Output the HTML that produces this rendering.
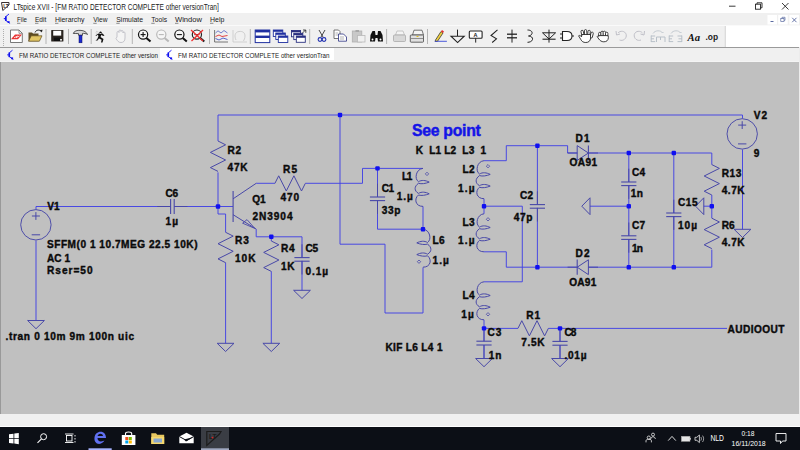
<!DOCTYPE html>
<html><head><meta charset="utf-8"><style>
*{margin:0;padding:0;box-sizing:border-box}
html,body{width:800px;height:450px;overflow:hidden;background:#c0c0c0;font-family:"Liberation Sans",sans-serif}
.a{position:absolute}
</style></head><body>
<div class="a" style="left:0;top:0;width:800px;height:13px;background:#fff"></div>
<div class="a" style="left:0;top:13px;width:800px;height:12px;background:#f0f0f0"></div>
<div class="a" style="left:0;top:25px;width:800px;height:1px;background:#fafafa"></div>
<div class="a" style="left:0;top:26px;width:725px;height:21px;background:#f0f0f0"></div>
<div class="a" style="left:725px;top:26px;width:75px;height:21px;background:#fff"></div>
<div class="a" style="left:0;top:47px;width:800px;height:1px;background:#9a9a9a"></div>
<div class="a" style="left:0;top:48px;width:800px;height:14px;background:#f0f0f0"></div>
<div class="a" style="left:0;top:61px;width:800px;height:1px;background:#f4f4f4"></div>
<div class="a" style="left:160px;top:48px;width:174px;height:12px;background:#fff"></div>
<div class="a" style="left:0;top:62px;width:800px;height:352px;background:#c0c0c0"></div>
<div class="a" style="left:0;top:62px;width:1px;height:352px;background:#999"></div>
<div class="a" style="left:799px;top:47px;width:1px;height:380px;background:#ececec"></div>
<div class="a" style="left:0;top:414px;width:800px;height:12px;background:#f0f0f0"></div>
<div class="a" style="left:0;top:426px;width:800px;height:1px;background:#fff"></div>
<div class="a" style="left:0;top:427px;width:800px;height:23px;background:#0c0f16"></div>
<svg class="a" style="left:0;top:0" width="800" height="450" viewBox="0 0 800 450" font-family="Liberation Sans, sans-serif">
<polyline points="218,141 218,115 742.5,115 742.5,118.5" fill="none" stroke="#4242e4" stroke-width="0.95"/>
<polyline points="218,172.4 218,206.5 233,206.5" fill="none" stroke="#4242e4" stroke-width="0.95"/>
<polyline points="170.5,206.5 36,206.5 36,209.5" fill="none" stroke="#4242e4" stroke-width="0.95"/>
<polyline points="36,240.5 36,320.5" fill="none" stroke="#4242e4" stroke-width="0.95"/>
<polyline points="174.2,206.5 218,206.5" fill="none" stroke="#4242e4" stroke-width="0.95"/>
<polyline points="218,206.5 218,214 225.6,214 225.6,232.3" fill="none" stroke="#4242e4" stroke-width="0.95"/>
<polyline points="225.6,262.7 225.6,343.3" fill="none" stroke="#4242e4" stroke-width="0.95"/>
<polyline points="256.2,183.3 274.9,183.3" fill="none" stroke="#4242e4" stroke-width="0.95"/>
<polyline points="256.2,229.1 256.2,236.8 302,236.8 302,257.6" fill="none" stroke="#4242e4" stroke-width="0.95"/>
<polyline points="305.3,183.3 362.5,183.3 362.5,168.4 423,168.4" fill="none" stroke="#4242e4" stroke-width="0.95"/>
<polyline points="271.3,236.8 271.3,241" fill="none" stroke="#4242e4" stroke-width="0.95"/>
<polyline points="271.3,271.4 271.3,343.3" fill="none" stroke="#4242e4" stroke-width="0.95"/>
<polyline points="302,260.8 302,290.3" fill="none" stroke="#4242e4" stroke-width="0.95"/>
<polyline points="340,115 340,244.2 385,244.2 385,313 423,313 423,267.4" fill="none" stroke="#4242e4" stroke-width="0.95"/>
<polyline points="377.5,168.4 377.5,197" fill="none" stroke="#4242e4" stroke-width="0.95"/>
<polyline points="377.5,200.2 377.5,229.2 423,229.2" fill="none" stroke="#4242e4" stroke-width="0.95"/>
<polyline points="423,206.4 423,229.2" fill="none" stroke="#4242e4" stroke-width="0.95"/>
<polyline points="484,160.7 506.3,160.7 506.3,145.7 567.6,145.7 567.6,153 577.3,153" fill="none" stroke="#4242e4" stroke-width="0.95"/>
<polyline points="484,198.7 484,206.2" fill="none" stroke="#4242e4" stroke-width="0.95"/>
<polyline points="484,206.2 484,213.8" fill="none" stroke="#4242e4" stroke-width="0.95"/>
<polyline points="484,206.2 522.3,206.2 522.3,281.8 484,281.8" fill="none" stroke="#4242e4" stroke-width="0.95"/>
<polyline points="484,251.8 506.3,251.8 506.3,267.2 577.3,267.2" fill="none" stroke="#4242e4" stroke-width="0.95"/>
<polyline points="484,319.8 484,328.4 518,328.4" fill="none" stroke="#4242e4" stroke-width="0.95"/>
<polyline points="548.4,328.4 727,328.4" fill="none" stroke="#4242e4" stroke-width="0.95"/>
<polyline points="484,328.4 484,341.2" fill="none" stroke="#4242e4" stroke-width="0.95"/>
<polyline points="484,345 484,358.5" fill="none" stroke="#4242e4" stroke-width="0.95"/>
<polyline points="560,328.4 560,341.4" fill="none" stroke="#4242e4" stroke-width="0.95"/>
<polyline points="560,345.2 560,358.5" fill="none" stroke="#4242e4" stroke-width="0.95"/>
<polyline points="537.4,145.7 537.4,204.6" fill="none" stroke="#4242e4" stroke-width="0.95"/>
<polyline points="537.4,207.8 537.4,267.2" fill="none" stroke="#4242e4" stroke-width="0.95"/>
<polyline points="588.4,153 711.8,153 711.8,164.6" fill="none" stroke="#4242e4" stroke-width="0.95"/>
<polyline points="588.4,267.2 711.8,267.2 711.8,249.6" fill="none" stroke="#4242e4" stroke-width="0.95"/>
<polyline points="628.8,153 628.8,182" fill="none" stroke="#4242e4" stroke-width="0.95"/>
<polyline points="628.8,185.2 628.8,235.8" fill="none" stroke="#4242e4" stroke-width="0.95"/>
<polyline points="628.8,239 628.8,267.2" fill="none" stroke="#4242e4" stroke-width="0.95"/>
<polyline points="590,206.2 628.8,206.2" fill="none" stroke="#4242e4" stroke-width="0.95"/>
<polyline points="673.8,153 673.8,213" fill="none" stroke="#4242e4" stroke-width="0.95"/>
<polyline points="673.8,216.2 673.8,267.2" fill="none" stroke="#4242e4" stroke-width="0.95"/>
<polyline points="711.8,195 711.8,218.2" fill="none" stroke="#4242e4" stroke-width="0.95"/>
<polyline points="703.8,206.2 711.8,206.2" fill="none" stroke="#4242e4" stroke-width="0.95"/>
<polyline points="742.5,149.5 742.5,229.3" fill="none" stroke="#4242e4" stroke-width="0.95"/>
<polyline points="218,141 225.6,144.8 210.4,152.4 225.6,160.0 210.4,167.6 218,171.4" fill="none" stroke="#4848a8" stroke-width="1.0"/>
<circle cx="35.9" cy="224.8" r="15.2" fill="none" stroke="#4848a8" stroke-width="0.95"/>
<line x1="31.9" y1="216.0" x2="39.9" y2="216.0" stroke="#4848a8" stroke-width="1.0"/>
<line x1="35.9" y1="212.10000000000002" x2="35.9" y2="219.9" stroke="#4848a8" stroke-width="1.0"/>
<line x1="31.7" y1="234.8" x2="40.1" y2="234.8" stroke="#4848a8" stroke-width="1.0"/>
<polygon points="27.599999999999998,320.5 44.4,320.5 36,328.70000000000005" fill="none" stroke="#4848a8" stroke-width="1.0"/>
<line x1="170.6" y1="198.9" x2="170.6" y2="214.1" stroke="#4848a8" stroke-width="1.1"/>
<line x1="174.2" y1="198.9" x2="174.2" y2="214.1" stroke="#4848a8" stroke-width="1.1"/>
<line x1="157.29999999999998" y1="206.5" x2="170.6" y2="206.5" stroke="#4848a8" stroke-width="0.95"/>
<line x1="174.2" y1="206.5" x2="187.5" y2="206.5" stroke="#4848a8" stroke-width="0.95"/>
<polyline points="225.6,232.3 233.2,236.10000000000002 218.0,243.70000000000002 233.2,251.3 218.0,258.90000000000003 225.6,262.7" fill="none" stroke="#4848a8" stroke-width="1.0"/>
<polygon points="217.2,343.3 234.0,343.3 225.6,351.50000000000006" fill="none" stroke="#4848a8" stroke-width="1.0"/>
<line x1="233.1" y1="191" x2="233.1" y2="222" stroke="#4848a8" stroke-width="1.1"/>
<line x1="233.1" y1="198.8" x2="256.2" y2="183.3" stroke="#4848a8" stroke-width="1.0"/>
<line x1="233.1" y1="214.7" x2="256.2" y2="229.1" stroke="#4848a8" stroke-width="1.0"/>
<polygon points="254.8,228.4 242.6,223.2 247.0,219.6" fill="none" stroke="#4848a8" stroke-width="0.9"/>
<polyline points="274.9,183.4 278.7,175.8 286.29999999999995,191.0 293.9,175.8 301.5,191.0 305.29999999999995,183.4" fill="none" stroke="#4848a8" stroke-width="1.0"/>
<polyline points="271.3,241 278.90000000000003,244.8 263.7,252.4 278.90000000000003,260.0 263.7,267.6 271.3,271.4" fill="none" stroke="#4848a8" stroke-width="1.0"/>
<polygon points="262.9,343.3 279.70000000000005,343.3 271.3,351.50000000000006" fill="none" stroke="#4848a8" stroke-width="1.0"/>
<line x1="294.4" y1="257.6" x2="309.6" y2="257.6" stroke="#4848a8" stroke-width="1.1"/>
<line x1="294.4" y1="261.20000000000005" x2="309.6" y2="261.20000000000005" stroke="#4848a8" stroke-width="1.1"/>
<line x1="302" y1="244.3" x2="302" y2="257.6" stroke="#4848a8" stroke-width="0.95"/>
<line x1="302" y1="261.20000000000005" x2="302" y2="274.50000000000006" stroke="#4848a8" stroke-width="0.95"/>
<polygon points="293.59999999999997,290.3 310.40000000000003,290.3 302,298.50000000000006" fill="none" stroke="#4848a8" stroke-width="1.0"/>
<line x1="369.9" y1="197" x2="385.1" y2="197" stroke="#4848a8" stroke-width="1.1"/>
<line x1="369.9" y1="200.6" x2="385.1" y2="200.6" stroke="#4848a8" stroke-width="1.1"/>
<line x1="377.5" y1="183.7" x2="377.5" y2="197" stroke="#4848a8" stroke-width="0.95"/>
<line x1="377.5" y1="200.6" x2="377.5" y2="213.9" stroke="#4848a8" stroke-width="0.95"/>
<path d="M423,168.4 C416,168.9 414,178.9 418.5,181.70000000000002 C421.5,179.8 425.5,180.20000000000002 429.2,182.1 C425.5,183.6 421.5,184.20000000000002 418.5,183.3 C414,186.4 414,190.9 418.5,193.4 C421.5,191.5 425.5,191.9 429.2,193.8 C425.5,195.3 421.5,195.9 418.5,195.0 C414,198.4 415,206.4 423,206.4" fill="none" stroke="#4848a8" stroke-width="1.0"/>
<polygon points="427,172.20000000000002 428.7,173.9 427,175.6 425.3,173.9" fill="none" stroke="#4848a8" stroke-width="0.8"/>
<path d="M423,229.2 C430,229.7 432,239.7 427.5,242.5 C424.5,240.6 420.5,241.0 416.8,242.89999999999998 C420.5,244.39999999999998 424.5,245.0 427.5,244.1 C432,247.2 432,251.7 427.5,254.2 C424.5,252.29999999999998 420.5,252.7 416.8,254.6 C420.5,256.09999999999997 424.5,256.7 427.5,255.79999999999998 C432,259.2 431,267.2 423,267.2" fill="none" stroke="#4848a8" stroke-width="1.0"/>
<polygon points="419,260.0 417.3,261.7 419,263.4 420.7,261.7" fill="none" stroke="#4848a8" stroke-width="0.8"/>
<path d="M484,160.7 C477,161.2 475,171.2 479.5,174.0 C482.5,172.1 486.5,172.5 490.2,174.39999999999998 C486.5,175.89999999999998 482.5,176.5 479.5,175.6 C475,178.7 475,183.2 479.5,185.7 C482.5,183.79999999999998 486.5,184.2 490.2,186.1 C486.5,187.6 482.5,188.2 479.5,187.29999999999998 C475,190.7 476,198.7 484,198.7" fill="none" stroke="#4848a8" stroke-width="1.0"/>
<polygon points="488,164.5 489.7,166.2 488,167.89999999999998 486.3,166.2" fill="none" stroke="#4848a8" stroke-width="0.8"/>
<path d="M484,213.8 C477,214.3 475,224.3 479.5,227.10000000000002 C482.5,225.20000000000002 486.5,225.60000000000002 490.2,227.5 C486.5,229.0 482.5,229.60000000000002 479.5,228.70000000000002 C475,231.8 475,236.3 479.5,238.8 C482.5,236.9 486.5,237.3 490.2,239.20000000000002 C486.5,240.70000000000002 482.5,241.3 479.5,240.4 C475,243.8 476,251.8 484,251.8" fill="none" stroke="#4848a8" stroke-width="1.0"/>
<polygon points="488,217.60000000000002 489.7,219.3 488,221.0 486.3,219.3" fill="none" stroke="#4848a8" stroke-width="0.8"/>
<path d="M484,281.8 C477,282.3 475,292.3 479.5,295.1 C482.5,293.2 486.5,293.6 490.2,295.5 C486.5,297.0 482.5,297.6 479.5,296.7 C475,299.8 475,304.3 479.5,306.8 C482.5,304.90000000000003 486.5,305.3 490.2,307.2 C486.5,308.7 482.5,309.3 479.5,308.40000000000003 C475,311.8 476,319.8 484,319.8" fill="none" stroke="#4848a8" stroke-width="1.0"/>
<polygon points="488,312.6 489.7,314.3 488,316.0 486.3,314.3" fill="none" stroke="#4848a8" stroke-width="0.8"/>
<polyline points="518,328.3 521.8,320.7 529.4,335.90000000000003 537.0,320.7 544.6,335.90000000000003 548.4,328.3" fill="none" stroke="#4848a8" stroke-width="1.0"/>
<line x1="476.4" y1="341.2" x2="491.6" y2="341.2" stroke="#4848a8" stroke-width="1.1"/>
<line x1="476.4" y1="345.0" x2="491.6" y2="345.0" stroke="#4848a8" stroke-width="1.1"/>
<line x1="484" y1="327.9" x2="484" y2="341.2" stroke="#4848a8" stroke-width="0.95"/>
<line x1="484" y1="345.0" x2="484" y2="358.3" stroke="#4848a8" stroke-width="0.95"/>
<polygon points="475.59999999999997,358.5 492.40000000000003,358.5 484,366.70000000000005" fill="none" stroke="#4848a8" stroke-width="1.0"/>
<line x1="552.4" y1="341.4" x2="567.6" y2="341.4" stroke="#4848a8" stroke-width="1.1"/>
<line x1="552.4" y1="345.2" x2="567.6" y2="345.2" stroke="#4848a8" stroke-width="1.1"/>
<line x1="560" y1="328.09999999999997" x2="560" y2="341.4" stroke="#4848a8" stroke-width="0.95"/>
<line x1="560" y1="345.2" x2="560" y2="358.5" stroke="#4848a8" stroke-width="0.95"/>
<polygon points="551.6,358.5 568.4,358.5 560,366.70000000000005" fill="none" stroke="#4848a8" stroke-width="1.0"/>
<line x1="529.8" y1="204.6" x2="545.0" y2="204.6" stroke="#4848a8" stroke-width="1.1"/>
<line x1="529.8" y1="208.2" x2="545.0" y2="208.2" stroke="#4848a8" stroke-width="1.1"/>
<line x1="537.4" y1="191.29999999999998" x2="537.4" y2="204.6" stroke="#4848a8" stroke-width="0.95"/>
<line x1="537.4" y1="208.2" x2="537.4" y2="221.5" stroke="#4848a8" stroke-width="0.95"/>
<polygon points="577.2,145.6 577.2,160.4 588.4,153" fill="none" stroke="#4848a8" stroke-width="1.0"/>
<line x1="588.4" y1="145.4" x2="588.4" y2="160.6" stroke="#4848a8" stroke-width="1.1"/>
<line x1="567.6" y1="153" x2="577.2" y2="153" stroke="#4848a8" stroke-width="0.95"/>
<line x1="588.4" y1="153" x2="598" y2="153" stroke="#4848a8" stroke-width="0.95"/>
<polygon points="588.4,259.8 588.4,274.6 577.2,267.2" fill="none" stroke="#4848a8" stroke-width="1.0"/>
<line x1="577.2" y1="259.6" x2="577.2" y2="274.8" stroke="#4848a8" stroke-width="1.1"/>
<line x1="567.6" y1="267.2" x2="577.2" y2="267.2" stroke="#4848a8" stroke-width="0.95"/>
<line x1="588.4" y1="267.2" x2="598" y2="267.2" stroke="#4848a8" stroke-width="0.95"/>
<line x1="621.1999999999999" y1="182" x2="636.4" y2="182" stroke="#4848a8" stroke-width="1.1"/>
<line x1="621.1999999999999" y1="185.6" x2="636.4" y2="185.6" stroke="#4848a8" stroke-width="1.1"/>
<line x1="628.8" y1="168.7" x2="628.8" y2="182" stroke="#4848a8" stroke-width="0.95"/>
<line x1="628.8" y1="185.6" x2="628.8" y2="198.9" stroke="#4848a8" stroke-width="0.95"/>
<line x1="621.1999999999999" y1="235.8" x2="636.4" y2="235.8" stroke="#4848a8" stroke-width="1.1"/>
<line x1="621.1999999999999" y1="239.4" x2="636.4" y2="239.4" stroke="#4848a8" stroke-width="1.1"/>
<line x1="628.8" y1="222.5" x2="628.8" y2="235.8" stroke="#4848a8" stroke-width="0.95"/>
<line x1="628.8" y1="239.4" x2="628.8" y2="252.70000000000002" stroke="#4848a8" stroke-width="0.95"/>
<polygon points="590,197.79999999999998 590,214.6 581.8,206.2" fill="none" stroke="#4848a8" stroke-width="1.0"/>
<line x1="666.1999999999999" y1="213" x2="681.4" y2="213" stroke="#4848a8" stroke-width="1.1"/>
<line x1="666.1999999999999" y1="216.6" x2="681.4" y2="216.6" stroke="#4848a8" stroke-width="1.1"/>
<line x1="673.8" y1="199.7" x2="673.8" y2="213" stroke="#4848a8" stroke-width="0.95"/>
<line x1="673.8" y1="216.6" x2="673.8" y2="229.9" stroke="#4848a8" stroke-width="0.95"/>
<polyline points="711.8,164.6 719.4,168.4 704.1999999999999,176.0 719.4,183.6 704.1999999999999,191.2 711.8,195.0" fill="none" stroke="#4848a8" stroke-width="1.0"/>
<polyline points="711.8,218.2 719.4,222.0 704.1999999999999,229.6 719.4,237.2 704.1999999999999,244.79999999999998 711.8,248.6" fill="none" stroke="#4848a8" stroke-width="1.0"/>
<polygon points="703.8,197.79999999999998 703.8,214.6 695.5999999999999,206.2" fill="none" stroke="#4848a8" stroke-width="1.0"/>
<circle cx="742.2" cy="133.9" r="15.2" fill="none" stroke="#4848a8" stroke-width="0.95"/>
<line x1="738.2" y1="125.10000000000001" x2="746.2" y2="125.10000000000001" stroke="#4848a8" stroke-width="1.0"/>
<line x1="742.2" y1="121.2" x2="742.2" y2="129.0" stroke="#4848a8" stroke-width="1.0"/>
<line x1="738.0" y1="143.9" x2="746.4000000000001" y2="143.9" stroke="#4848a8" stroke-width="1.0"/>
<polygon points="734.1,229.3 750.9,229.3 742.5,237.5" fill="none" stroke="#4848a8" stroke-width="1.0"/>
<rect x="215.8" y="204.3" width="4.4" height="4.4" rx="1" fill="#1010f0"/>
<rect x="337.8" y="112.8" width="4.4" height="4.4" rx="1" fill="#1010f0"/>
<rect x="375.3" y="166.20000000000002" width="4.4" height="4.4" rx="1" fill="#1010f0"/>
<rect x="420.8" y="227.0" width="4.4" height="4.4" rx="1" fill="#1010f0"/>
<rect x="269.1" y="234.60000000000002" width="4.4" height="4.4" rx="1" fill="#1010f0"/>
<rect x="535.1999999999999" y="143.5" width="4.4" height="4.4" rx="1" fill="#1010f0"/>
<rect x="626.5999999999999" y="150.8" width="4.4" height="4.4" rx="1" fill="#1010f0"/>
<rect x="671.5999999999999" y="150.8" width="4.4" height="4.4" rx="1" fill="#1010f0"/>
<rect x="481.8" y="204.0" width="4.4" height="4.4" rx="1" fill="#1010f0"/>
<rect x="626.5999999999999" y="204.0" width="4.4" height="4.4" rx="1" fill="#1010f0"/>
<rect x="709.5999999999999" y="204.0" width="4.4" height="4.4" rx="1" fill="#1010f0"/>
<rect x="626.5999999999999" y="265.0" width="4.4" height="4.4" rx="1" fill="#1010f0"/>
<rect x="671.5999999999999" y="265.0" width="4.4" height="4.4" rx="1" fill="#1010f0"/>
<rect x="535.1999999999999" y="265.0" width="4.4" height="4.4" rx="1" fill="#1010f0"/>
<rect x="481.8" y="326.2" width="4.4" height="4.4" rx="1" fill="#1010f0"/>
<rect x="557.8" y="326.2" width="4.4" height="4.4" rx="1" fill="#1010f0"/>
<text x="47.2" y="210.15" textLength="12.5" lengthAdjust="spacing" font-size="10.1" font-weight="bold" fill="#0a0a0a" stroke="#0a0a0a" stroke-width="0.38" xml:space="preserve">V1</text>
<text x="165.5" y="196.65" textLength="12.7" lengthAdjust="spacing" font-size="10.1" font-weight="bold" fill="#0a0a0a" stroke="#0a0a0a" stroke-width="0.38" xml:space="preserve">C6</text>
<text x="165.5" y="224.85" textLength="12.5" lengthAdjust="spacing" font-size="10.1" font-weight="bold" fill="#0a0a0a" stroke="#0a0a0a" stroke-width="0.38" xml:space="preserve">1µ</text>
<text x="47" y="248.15" textLength="150.5" lengthAdjust="spacing" font-size="10.1" font-weight="bold" fill="#0a0a0a" stroke="#0a0a0a" stroke-width="0.38" xml:space="preserve">SFFM(0 1 10.7MEG 22.5 10K)</text>
<text x="47" y="261.85" textLength="23.0" lengthAdjust="spacing" font-size="10.1" font-weight="bold" fill="#0a0a0a" stroke="#0a0a0a" stroke-width="0.38" xml:space="preserve">AC 1</text>
<text x="47" y="273.65" textLength="45.5" lengthAdjust="spacing" font-size="10.1" font-weight="bold" fill="#0a0a0a" stroke="#0a0a0a" stroke-width="0.38" xml:space="preserve">Rser=50</text>
<text x="5.5" y="339.85" textLength="128.5" lengthAdjust="spacing" font-size="10.1" font-weight="bold" fill="#0a0a0a" stroke="#0a0a0a" stroke-width="0.38" xml:space="preserve">.tran 0 10m 9m 100n uic</text>
<text x="227.5" y="153.75" textLength="13.6" lengthAdjust="spacing" font-size="10.1" font-weight="bold" fill="#0a0a0a" stroke="#0a0a0a" stroke-width="0.38" xml:space="preserve">R2</text>
<text x="227.5" y="170.65" textLength="20.1" lengthAdjust="spacing" font-size="10.1" font-weight="bold" fill="#0a0a0a" stroke="#0a0a0a" stroke-width="0.38" xml:space="preserve">47K</text>
<text x="283" y="173.15" textLength="14.0" lengthAdjust="spacing" font-size="10.1" font-weight="bold" fill="#0a0a0a" stroke="#0a0a0a" stroke-width="0.38" xml:space="preserve">R5</text>
<text x="280.5" y="201.15" textLength="18.5" lengthAdjust="spacing" font-size="10.1" font-weight="bold" fill="#0a0a0a" stroke="#0a0a0a" stroke-width="0.38" xml:space="preserve">470</text>
<text x="252.2" y="202.95" textLength="13.4" lengthAdjust="spacing" font-size="10.1" font-weight="bold" fill="#0a0a0a" stroke="#0a0a0a" stroke-width="0.38" xml:space="preserve">Q1</text>
<text x="252.5" y="219.85" textLength="40.0" lengthAdjust="spacing" font-size="10.1" font-weight="bold" fill="#0a0a0a" stroke="#0a0a0a" stroke-width="0.38" xml:space="preserve">2N3904</text>
<text x="235" y="244.35" textLength="13.8" lengthAdjust="spacing" font-size="10.1" font-weight="bold" fill="#0a0a0a" stroke="#0a0a0a" stroke-width="0.38" xml:space="preserve">R3</text>
<text x="235" y="261.85" textLength="20.5" lengthAdjust="spacing" font-size="10.1" font-weight="bold" fill="#0a0a0a" stroke="#0a0a0a" stroke-width="0.38" xml:space="preserve">10K</text>
<text x="281" y="251.85" textLength="13.5" lengthAdjust="spacing" font-size="10.1" font-weight="bold" fill="#0a0a0a" stroke="#0a0a0a" stroke-width="0.38" xml:space="preserve">R4</text>
<text x="281" y="269.85" textLength="13.5" lengthAdjust="spacing" font-size="10.1" font-weight="bold" fill="#0a0a0a" stroke="#0a0a0a" stroke-width="0.38" xml:space="preserve">1K</text>
<text x="305.5" y="251.85" textLength="12.5" lengthAdjust="spacing" font-size="10.1" font-weight="bold" fill="#0a0a0a" stroke="#0a0a0a" stroke-width="0.38" xml:space="preserve">C5</text>
<text x="305.5" y="274.85" textLength="22.5" lengthAdjust="spacing" font-size="10.1" font-weight="bold" fill="#0a0a0a" stroke="#0a0a0a" stroke-width="0.38" xml:space="preserve">0.1µ</text>
<text x="415.8" y="153.65" textLength="70.2" lengthAdjust="spacing" font-size="10.1" font-weight="bold" fill="#0a0a0a" stroke="#0a0a0a" stroke-width="0.38" xml:space="preserve">K  L1 L2  L3  1</text>
<text x="381.7" y="192.25" textLength="12.4" lengthAdjust="spacing" font-size="10.1" font-weight="bold" fill="#0a0a0a" stroke="#0a0a0a" stroke-width="0.38" xml:space="preserve">C1</text>
<text x="381.7" y="214.05" textLength="18.6" lengthAdjust="spacing" font-size="10.1" font-weight="bold" fill="#0a0a0a" stroke="#0a0a0a" stroke-width="0.38" xml:space="preserve">33p</text>
<text x="401.9" y="180.15" textLength="10.4" lengthAdjust="spacing" font-size="10.1" font-weight="bold" fill="#0a0a0a" stroke="#0a0a0a" stroke-width="0.38" xml:space="preserve">L1</text>
<text x="396.7" y="200.05" textLength="16.1" lengthAdjust="spacing" font-size="10.1" font-weight="bold" fill="#0a0a0a" stroke="#0a0a0a" stroke-width="0.38" xml:space="preserve">1.µ</text>
<text x="432.5" y="244.35" textLength="12.0" lengthAdjust="spacing" font-size="10.1" font-weight="bold" fill="#0a0a0a" stroke="#0a0a0a" stroke-width="0.38" xml:space="preserve">L6</text>
<text x="432.5" y="264.35" textLength="16.3" lengthAdjust="spacing" font-size="10.1" font-weight="bold" fill="#0a0a0a" stroke="#0a0a0a" stroke-width="0.38" xml:space="preserve">1.µ</text>
<text x="462.5" y="172.85" textLength="12.0" lengthAdjust="spacing" font-size="10.1" font-weight="bold" fill="#0a0a0a" stroke="#0a0a0a" stroke-width="0.38" xml:space="preserve">L2</text>
<text x="458" y="191.85" textLength="16.5" lengthAdjust="spacing" font-size="10.1" font-weight="bold" fill="#0a0a0a" stroke="#0a0a0a" stroke-width="0.38" xml:space="preserve">1.µ</text>
<text x="462.5" y="226.15" textLength="12.0" lengthAdjust="spacing" font-size="10.1" font-weight="bold" fill="#0a0a0a" stroke="#0a0a0a" stroke-width="0.38" xml:space="preserve">L3</text>
<text x="458" y="244.35" textLength="16.5" lengthAdjust="spacing" font-size="10.1" font-weight="bold" fill="#0a0a0a" stroke="#0a0a0a" stroke-width="0.38" xml:space="preserve">1.µ</text>
<text x="462.5" y="298.65" textLength="12.0" lengthAdjust="spacing" font-size="10.1" font-weight="bold" fill="#0a0a0a" stroke="#0a0a0a" stroke-width="0.38" xml:space="preserve">L4</text>
<text x="461.3" y="317.85" textLength="12.5" lengthAdjust="spacing" font-size="10.1" font-weight="bold" fill="#0a0a0a" stroke="#0a0a0a" stroke-width="0.38" xml:space="preserve">1µ</text>
<text x="520" y="198.65" textLength="13.0" lengthAdjust="spacing" font-size="10.1" font-weight="bold" fill="#0a0a0a" stroke="#0a0a0a" stroke-width="0.38" xml:space="preserve">C2</text>
<text x="513.8" y="221.15" textLength="18.7" lengthAdjust="spacing" font-size="10.1" font-weight="bold" fill="#0a0a0a" stroke="#0a0a0a" stroke-width="0.38" xml:space="preserve">47p</text>
<text x="575.5" y="142.35" textLength="14.0" lengthAdjust="spacing" font-size="10.1" font-weight="bold" fill="#0a0a0a" stroke="#0a0a0a" stroke-width="0.38" xml:space="preserve">D1</text>
<text x="569.5" y="166.15" textLength="27.5" lengthAdjust="spacing" font-size="10.1" font-weight="bold" fill="#0a0a0a" stroke="#0a0a0a" stroke-width="0.38" xml:space="preserve">OA91</text>
<text x="575.5" y="257.35" textLength="14.0" lengthAdjust="spacing" font-size="10.1" font-weight="bold" fill="#0a0a0a" stroke="#0a0a0a" stroke-width="0.38" xml:space="preserve">D2</text>
<text x="569.3" y="286.15" textLength="27.0" lengthAdjust="spacing" font-size="10.1" font-weight="bold" fill="#0a0a0a" stroke="#0a0a0a" stroke-width="0.38" xml:space="preserve">OA91</text>
<text x="632" y="176.15" textLength="13.0" lengthAdjust="spacing" font-size="10.1" font-weight="bold" fill="#0a0a0a" stroke="#0a0a0a" stroke-width="0.38" xml:space="preserve">C4</text>
<text x="630.8" y="196.85" textLength="12.2" lengthAdjust="spacing" font-size="10.1" font-weight="bold" fill="#0a0a0a" stroke="#0a0a0a" stroke-width="0.38" xml:space="preserve">1n</text>
<text x="632" y="228.65" textLength="13.0" lengthAdjust="spacing" font-size="10.1" font-weight="bold" fill="#0a0a0a" stroke="#0a0a0a" stroke-width="0.38" xml:space="preserve">C7</text>
<text x="632" y="251.85" textLength="11.0" lengthAdjust="spacing" font-size="10.1" font-weight="bold" fill="#0a0a0a" stroke="#0a0a0a" stroke-width="0.38" xml:space="preserve">1n</text>
<text x="678" y="206.15" textLength="19.5" lengthAdjust="spacing" font-size="10.1" font-weight="bold" fill="#0a0a0a" stroke="#0a0a0a" stroke-width="0.38" xml:space="preserve">C15</text>
<text x="678" y="228.65" textLength="19.0" lengthAdjust="spacing" font-size="10.1" font-weight="bold" fill="#0a0a0a" stroke="#0a0a0a" stroke-width="0.38" xml:space="preserve">10µ</text>
<text x="753.8" y="118.65" textLength="13.2" lengthAdjust="spacing" font-size="10.1" font-weight="bold" fill="#0a0a0a" stroke="#0a0a0a" stroke-width="0.38" xml:space="preserve">V2</text>
<text x="753.8" y="156.85" textLength="6.2" lengthAdjust="spacing" font-size="10.1" font-weight="bold" fill="#0a0a0a" stroke="#0a0a0a" stroke-width="0.38" xml:space="preserve">9</text>
<text x="721.8" y="176.85" textLength="19.5" lengthAdjust="spacing" font-size="10.1" font-weight="bold" fill="#0a0a0a" stroke="#0a0a0a" stroke-width="0.38" xml:space="preserve">R13</text>
<text x="721.8" y="193.65" textLength="22.7" lengthAdjust="spacing" font-size="10.1" font-weight="bold" fill="#0a0a0a" stroke="#0a0a0a" stroke-width="0.38" xml:space="preserve">4.7K</text>
<text x="721.8" y="228.65" textLength="12.7" lengthAdjust="spacing" font-size="10.1" font-weight="bold" fill="#0a0a0a" stroke="#0a0a0a" stroke-width="0.38" xml:space="preserve">R6</text>
<text x="721.8" y="246.15" textLength="22.7" lengthAdjust="spacing" font-size="10.1" font-weight="bold" fill="#0a0a0a" stroke="#0a0a0a" stroke-width="0.38" xml:space="preserve">4.7K</text>
<text x="526.3" y="318.65" textLength="13.7" lengthAdjust="spacing" font-size="10.1" font-weight="bold" fill="#0a0a0a" stroke="#0a0a0a" stroke-width="0.38" xml:space="preserve">R1</text>
<text x="521.3" y="346.15" textLength="23.2" lengthAdjust="spacing" font-size="10.1" font-weight="bold" fill="#0a0a0a" stroke="#0a0a0a" stroke-width="0.38" xml:space="preserve">7.5K</text>
<text x="487.5" y="336.15" textLength="13.8" lengthAdjust="spacing" font-size="10.1" font-weight="bold" fill="#0a0a0a" stroke="#0a0a0a" stroke-width="0.38" xml:space="preserve">C3</text>
<text x="488.8" y="358.65" textLength="12.5" lengthAdjust="spacing" font-size="10.1" font-weight="bold" fill="#0a0a0a" stroke="#0a0a0a" stroke-width="0.38" xml:space="preserve">1n</text>
<text x="564.4" y="335.95" textLength="12.0" lengthAdjust="spacing" font-size="10.1" font-weight="bold" fill="#0a0a0a" stroke="#0a0a0a" stroke-width="0.38" xml:space="preserve">C8</text>
<text x="564.4" y="358.65" textLength="22.1" lengthAdjust="spacing" font-size="10.1" font-weight="bold" fill="#0a0a0a" stroke="#0a0a0a" stroke-width="0.38" xml:space="preserve">.01µ</text>
<text x="385.5" y="350.65" textLength="57.0" lengthAdjust="spacing" font-size="10.1" font-weight="bold" fill="#0a0a0a" stroke="#0a0a0a" stroke-width="0.38" xml:space="preserve">KIF L6 L4 1</text>
<text x="727.5" y="332.65" textLength="56.9" lengthAdjust="spacing" font-size="10.1" font-weight="bold" fill="#0a0a0a" stroke="#0a0a0a" stroke-width="0.38" xml:space="preserve">AUDIOOUT</text>
<text x="412" y="136.17" textLength="68.8" lengthAdjust="spacing" font-size="15.8" font-weight="bold" fill="#1414e6" stroke="#1414e6" stroke-width="0.45" xml:space="preserve">See point</text>
<path d="M1.5,2.5 L9,2.5 L9,5 L2.8,10.5 Z" fill="none" stroke="#3a3030" stroke-width="1"/>
<text x="3.2" y="7.6" font-size="5" font-weight="bold" fill="#3a3030">LT</text>
<text x="13.5" y="9.9" textLength="205.3" lengthAdjust="spacingAndGlyphs" font-size="8.3" font-weight="normal" fill="#222" >LTspice XVII - [FM RATIO DETECTOR COMPLETE other versionTran]</text>
<line x1="729" y1="6.2" x2="735.5" y2="6.2" stroke="#222" stroke-width="0.9"/>
<rect x="755.5" y="4.2" width="5" height="5" fill="none" stroke="#222" stroke-width="0.9"/>
<path d="M757,4.2 V2.8 H762 V7.8 H760.5" fill="none" stroke="#222" stroke-width="0.9"/>
<path d="M782,3 L788.5,9.5 M788.5,3 L782,9.5" stroke="#222" stroke-width="0.9"/>
<path d="M9,14 L5.8,16.6 V20.5 L8.5,22.3 L9.7,23.6" fill="none" stroke="#1010f0" stroke-width="0.9"/><rect x="5" y="16.3" width="1.6" height="4.6" fill="#1010f0"/><rect x="3.8" y="18.1" width="1.5" height="1.1" fill="#1010f0"/><rect x="7.6" y="21.2" width="2" height="1.8" fill="#1010f0"/>
<text x="17" y="22.1" textLength="10.0" lengthAdjust="spacingAndGlyphs" font-size="8.0" font-weight="normal" fill="#1a1a1a" >File</text>
<line x1="17" y1="23.3" x2="20.4" y2="23.3" stroke="#444" stroke-width="0.6"/>
<text x="35" y="22.1" textLength="11.3" lengthAdjust="spacingAndGlyphs" font-size="8.0" font-weight="normal" fill="#1a1a1a" >Edit</text>
<line x1="35" y1="23.3" x2="38.4" y2="23.3" stroke="#444" stroke-width="0.6"/>
<text x="55" y="22.1" textLength="29.5" lengthAdjust="spacingAndGlyphs" font-size="8.0" font-weight="normal" fill="#1a1a1a" >Hierarchy</text>
<line x1="55" y1="23.3" x2="58.4" y2="23.3" stroke="#444" stroke-width="0.6"/>
<text x="93.3" y="22.1" textLength="14.2" lengthAdjust="spacingAndGlyphs" font-size="8.0" font-weight="normal" fill="#1a1a1a" >View</text>
<line x1="93.3" y1="23.3" x2="96.7" y2="23.3" stroke="#444" stroke-width="0.6"/>
<text x="116.3" y="22.1" textLength="26.7" lengthAdjust="spacingAndGlyphs" font-size="8.0" font-weight="normal" fill="#1a1a1a" >Simulate</text>
<line x1="116.3" y1="23.3" x2="119.7" y2="23.3" stroke="#444" stroke-width="0.6"/>
<text x="151.3" y="22.1" textLength="15.7" lengthAdjust="spacingAndGlyphs" font-size="8.0" font-weight="normal" fill="#1a1a1a" >Tools</text>
<line x1="151.3" y1="23.3" x2="154.70000000000002" y2="23.3" stroke="#444" stroke-width="0.6"/>
<text x="175" y="22.1" textLength="27.0" lengthAdjust="spacingAndGlyphs" font-size="8.0" font-weight="normal" fill="#1a1a1a" >Window</text>
<line x1="175" y1="23.3" x2="178.4" y2="23.3" stroke="#444" stroke-width="0.6"/>
<text x="210" y="22.1" textLength="14.3" lengthAdjust="spacingAndGlyphs" font-size="8.0" font-weight="normal" fill="#1a1a1a" >Help</text>
<line x1="210" y1="23.3" x2="213.4" y2="23.3" stroke="#444" stroke-width="0.6"/>
<rect x="767.5" y="15" width="9.5" height="9.5" fill="#fff"/>
<rect x="778.2" y="15" width="9.5" height="9.5" fill="#fff"/>
<rect x="789.4" y="15" width="9.5" height="9.5" fill="#fff"/>
<line x1="770.5" y1="21.5" x2="773.5" y2="21.5" stroke="#5a6aa0" stroke-width="1"/>
<rect x="780.8" y="18.5" width="3.2" height="3" fill="none" stroke="#5a6aa0" stroke-width="0.7"/><path d="M782,18.5 V17.3 H785 V20.3 H784" fill="none" stroke="#5a6aa0" stroke-width="0.7"/>
<path d="M792.2,17.8 L796.5,22.2 M796.5,17.8 L792.2,22.2" stroke="#5a6aa0" stroke-width="0.9"/>
<rect x="3" y="29" width="0.9" height="0.9" fill="#a0a0a0"/>
<rect x="3" y="31" width="0.9" height="0.9" fill="#a0a0a0"/>
<rect x="3" y="33" width="0.9" height="0.9" fill="#a0a0a0"/>
<rect x="3" y="35" width="0.9" height="0.9" fill="#a0a0a0"/>
<rect x="3" y="37" width="0.9" height="0.9" fill="#a0a0a0"/>
<rect x="3" y="39" width="0.9" height="0.9" fill="#a0a0a0"/>
<rect x="3" y="41" width="0.9" height="0.9" fill="#a0a0a0"/>
<rect x="3" y="43" width="0.9" height="0.9" fill="#a0a0a0"/>
<rect x="3" y="45" width="0.9" height="0.9" fill="#a0a0a0"/>
<line x1="46" y1="29" x2="46" y2="44" stroke="#b4b4b4" stroke-width="1"/>
<line x1="68.5" y1="29" x2="68.5" y2="44" stroke="#b4b4b4" stroke-width="1"/>
<line x1="91.2" y1="29" x2="91.2" y2="44" stroke="#b4b4b4" stroke-width="1"/>
<line x1="132.3" y1="29" x2="132.3" y2="44" stroke="#b4b4b4" stroke-width="1"/>
<line x1="209.5" y1="29" x2="209.5" y2="44" stroke="#b4b4b4" stroke-width="1"/>
<line x1="250.3" y1="29" x2="250.3" y2="44" stroke="#b4b4b4" stroke-width="1"/>
<line x1="309.7" y1="29" x2="309.7" y2="44" stroke="#b4b4b4" stroke-width="1"/>
<line x1="386.6" y1="29" x2="386.6" y2="44" stroke="#b4b4b4" stroke-width="1"/>
<line x1="427.5" y1="29" x2="427.5" y2="44" stroke="#b4b4b4" stroke-width="1"/>
<line x1="725.3" y1="26" x2="725.3" y2="47" stroke="#c8c8c8" stroke-width="0.8"/>
<path d="M10.5,30 H19 L22.3,33.3 V42.5 H10.5 Z" fill="#fff" stroke="#6a6a6a" stroke-width="0.9"/>
<path d="M19,30 V33.3 H22.3" fill="none" stroke="#6a6a6a" stroke-width="0.7"/>
<path d="M11,39.3 L15,34.5 H22 L18,39.3 Z" fill="#e83434"/>
<path d="M14,37.8 L17.5,36.2 L16,37.6 L19.5,36" fill="none" stroke="#fff" stroke-width="0.8"/>
<path d="M28.5,32.5 H32 L33,33.5 H38.5 V41.2 H28.5 Z" fill="#5e4c22"/>
<path d="M28.6,41.2 L31.2,35.8 H42 L39.4,41.2 Z" fill="#e2c664" stroke="#5e4c22" stroke-width="0.7"/>
<path d="M35,32.5 C36,29.8 39.5,29.3 41,31.3" fill="none" stroke="#222" stroke-width="1"/><path d="M39.6,30 L41.8,32.6 L42.6,29.8 Z" fill="#222"/>
<rect x="51.2" y="30" width="12.2" height="11.6" rx="0.6" fill="#2a2520"/>
<rect x="53.2" y="30.8" width="8" height="4.8" fill="#fff"/>
<rect x="54" y="37.6" width="6" height="3.4" fill="#111"/><rect x="60" y="39" width="2" height="1.6" fill="#ddd"/>
<path d="M73.3,33.5 C74,31 77,30 81,30.4 C84,30.6 86.5,32 87.5,34.5 C86,33.6 84,33.2 82.5,33.4 L82.5,35.2 L78.5,35.2 L78.5,33.6 C76.5,33.4 74.8,33.6 73.3,33.5 Z" fill="#d8d8d8" stroke="#333" stroke-width="0.8"/>
<rect x="79" y="35.2" width="3" height="7.6" fill="#1a2ad0" stroke="#0a0a60" stroke-width="0.5"/>
<path d="M100.5,31.5 a1.3,1.3 0 1 0 0.1,0 Z M99.5,33 L102.5,33.5 L104.5,35.5 L103,36 L101.5,34.8 L100.5,37 L103.5,39 L102.5,42.5 L101,42.5 L101.6,39.8 L99,38.5 L97.5,40.5 L95.5,40.5 L97.2,39.3 L98.5,36 L97.8,34.8 L96,36 L95.6,35.3 Z" fill="#111"/>
<path d="M96,31.2 L98.5,32.2 M95.5,32.8 L97.5,33.4" stroke="#aaa" stroke-width="0.5"/>
<path d="M117,37 V32.5 a1,1 0 0 1 2,0 V31 a1,1 0 0 1 2,0 V31.5 a1,1 0 0 1 2,0 V33 a1,1 0 0 1 2,0 V38 C125,41 123.5,42.5 121,42.5 C118.5,42.5 117.5,41 116,38.5 Z" fill="#f4f4f4" stroke="#b8b8c0" stroke-width="0.8"/>
<circle cx="143.1" cy="34.6" r="4.6" fill="#fafafa" fill-opacity="0.6" stroke="#111" stroke-width="1.2"/>
<line x1="146.4" y1="37.9" x2="150.5" y2="41.6" stroke="#111" stroke-width="2"/>
<line x1="140.6" y1="34.6" x2="145.6" y2="34.6" stroke="#111" stroke-width="1.1"/>
<line x1="143.1" y1="32.1" x2="143.1" y2="37.1" stroke="#111" stroke-width="1.1"/>
<circle cx="161.3" cy="34.6" r="4.6" fill="#fafafa" fill-opacity="0.6" stroke="#b8b8b8" stroke-width="1.2"/>
<line x1="164.60000000000002" y1="37.9" x2="168.70000000000002" y2="41.6" stroke="#b8b8b8" stroke-width="2"/>
<line x1="158.8" y1="34.6" x2="163.8" y2="34.6" stroke="#b8b8b8" stroke-width="1.1"/>
<circle cx="179.4" cy="34.6" r="4.6" fill="#fafafa" fill-opacity="0.6" stroke="#111" stroke-width="1.2"/>
<line x1="182.70000000000002" y1="37.9" x2="186.8" y2="41.6" stroke="#111" stroke-width="2"/>
<line x1="176.9" y1="34.6" x2="181.9" y2="34.6" stroke="#111" stroke-width="1.1"/>
<circle cx="196.9" cy="34.6" r="4.6" fill="#fafafa" fill-opacity="0.6" stroke="#222" stroke-width="1.2"/>
<line x1="200.20000000000002" y1="37.9" x2="204.3" y2="41.6" stroke="#222" stroke-width="2"/>
<line x1="194.4" y1="34.6" x2="199.4" y2="34.6" stroke="#222" stroke-width="1.1"/>
<path d="M191,30 L203,41 M203,30 L191.5,41" stroke="#f03030" stroke-width="1.3"/>
<path d="M214.6,30 V42 H228" fill="none" stroke="#555" stroke-width="0.8"/>
<path d="M215.5,33 L218,30.8 L221,33 L224,30.5 L227.5,33" fill="none" stroke="#5060c0" stroke-width="0.8"/>
<path d="M215.5,36.5 L219,35 L222,36.5 L227.5,35.5" fill="none" stroke="#e03030" stroke-width="0.9"/>
<path d="M215.5,38.5 L219,40 L223,38 L227.5,39.5" fill="none" stroke="#3040c0" stroke-width="0.8"/>
<path d="M233,30 V42 H247" fill="none" stroke="#c8c8c8" stroke-width="0.8"/><path d="M236,40 C234,36 235,32 239,31.5 C243,31 245,33 245,36 C245,38 244,40 243.5,41" fill="none" stroke="#c4c4c4" stroke-width="0.8"/>
<rect x="255.2" y="30" width="14.6" height="12.6" fill="#fff" stroke="#2030a0" stroke-width="1"/>
<rect x="255.2" y="30" width="14.6" height="2.4" fill="#2030a0"/><rect x="255.2" y="35.6" width="14.6" height="2.4" fill="#2030a0"/>
<rect x="273.3" y="30" width="9.5" height="6.5" fill="#fff" stroke="#2030a0" stroke-width="0.9"/><rect x="273.3" y="30" width="9.5" height="1.8" fill="#2030a0"/>
<rect x="275.8" y="33" width="9.5" height="6.5" fill="#fff" stroke="#2030a0" stroke-width="0.9"/><rect x="275.8" y="33" width="9.5" height="1.8" fill="#2030a0"/>
<rect x="278.3" y="36" width="9.5" height="6.5" fill="#fff" stroke="#2030a0" stroke-width="0.9"/><rect x="278.3" y="36" width="9.5" height="1.8" fill="#2030a0"/>
<rect x="291.5" y="30.5" width="9" height="6.3" fill="#fff" stroke="#2a3080" stroke-width="0.9"/><rect x="291.5" y="30.5" width="9" height="1.8" fill="#2a3080"/>
<rect x="293.8" y="33.3" width="9" height="6.3" fill="#fff" stroke="#2a3080" stroke-width="0.9"/><rect x="293.8" y="33.3" width="9" height="1.8" fill="#2a3080"/>
<rect x="296.3" y="36" width="9" height="6.3" fill="#fff" stroke="#2a3080" stroke-width="0.9"/><rect x="296.3" y="36" width="9" height="1.8" fill="#2a3080"/>
<path d="M302.5,33 L305.5,30 M303,30 H305.8 V32.8" fill="none" stroke="#222" stroke-width="0.8"/>
<path d="M319,30 L323,37 M325,30 L321,37" stroke="#333" stroke-width="0.9"/>
<circle cx="320" cy="39.5" r="1.9" fill="none" stroke="#2030b0" stroke-width="1.1"/><circle cx="324" cy="39.5" r="1.9" fill="none" stroke="#2030b0" stroke-width="1.1"/>
<path d="M334,30 H338.5 L340,31.5 V38.5 H334 Z" fill="#fff" stroke="#555" stroke-width="0.8"/>
<path d="M338.5,34 H343.5 L346.5,37 V41.2 H338.5 Z" fill="#fff" stroke="#2a3080" stroke-width="0.8"/>
<path d="M335.5,33 H338 M335.5,35 H338 M340,37 H344 M340,39 H344" stroke="#666" stroke-width="0.5"/>
<rect x="352.3" y="31" width="9.5" height="11" fill="#c8c8c8" stroke="#b0b0b0" stroke-width="0.8"/><rect x="355.5" y="30" width="3.5" height="2" fill="#a8a8a8"/>
<rect x="357.5" y="35.5" width="7.5" height="6.5" fill="#f0f0f0" stroke="#b8b8b8" stroke-width="0.8"/>
<path d="M370,41.5 L370.5,35 L372.5,31 H375 L375.5,35 H377.5 L378,31 H380.5 L382.5,35 L383,41.5 H378 L377.5,38 H375.5 L375,41.5 Z" fill="#111"/>
<circle cx="372.5" cy="39.5" r="1" fill="#fff"/><circle cx="380.5" cy="39.5" r="1" fill="#fff"/>
<path d="M395.5,35 L397,31 H403 L404.5,35 Z" fill="#f4f4f4" stroke="#bbb" stroke-width="0.8"/><rect x="393.5" y="35" width="12" height="6.5" rx="1" fill="#d8d8d8" stroke="#aaa" stroke-width="0.8"/>
<path d="M412.5,35 L414,30.2 H422 L423.5,35 Z" fill="#f4f4f4" stroke="#555" stroke-width="0.8"/><rect x="410.3" y="35" width="13.2" height="7.2" rx="0.8" fill="#e0e0e0" stroke="#444" stroke-width="0.8"/><line x1="411" y1="38.5" x2="423" y2="38.5" stroke="#555" stroke-width="0.6"/><rect x="416.5" y="36" width="2" height="1" fill="#e0c020"/>
<path d="M435.5,40 L441,31.5 L443,33 L437.5,41.3 L435.2,41.5 Z" fill="#f0d040" stroke="#222" stroke-width="0.7"/><path d="M441,31.5 L442,30 L444,31.5 L443,33 Z" fill="#e83030"/>
<line x1="434.8" y1="41.3" x2="446.9" y2="41.3" stroke="#3a48d8" stroke-width="0.9"/>
<line x1="457.5" y1="29.6" x2="457.5" y2="36" stroke="#222" stroke-width="1"/><path d="M451,36.2 H464.2 L457.6,42.6 Z" fill="none" stroke="#222" stroke-width="1.1"/>
<rect x="469.3" y="31" width="12.8" height="7.3" rx="1" fill="#fff" stroke="#222" stroke-width="1.1"/><line x1="475.7" y1="38.3" x2="475.7" y2="42.6" stroke="#222" stroke-width="1"/><text x="473.5" y="37.2" font-size="5.5" font-weight="bold" fill="#222">A</text>
<path d="M497.5,29.8 L491,35.5 L496.5,38.8 L492.2,42.5" fill="none" stroke="#222" stroke-width="1.05"/>
<line x1="512" y1="29.6" x2="512" y2="42.6" stroke="#222" stroke-width="1"/><line x1="507" y1="34.2" x2="517" y2="34.2" stroke="#222" stroke-width="1.3"/><line x1="507" y1="37.8" x2="517" y2="37.8" stroke="#222" stroke-width="1.3"/>
<path d="M527.5,30 C531,30 532.5,31.8 532,33.5 C531.5,35.5 529,36 528.5,36 C531,36 533,37.5 532.5,39.5 C532,41.5 529.5,42.3 527.5,42.3" fill="none" stroke="#222" stroke-width="1"/>
<line x1="549" y1="29.6" x2="549" y2="42.6" stroke="#222" stroke-width="1"/><path d="M542.5,32.8 H555.6 L549,39 Z" fill="none" stroke="#222" stroke-width="1"/><line x1="542.5" y1="39.2" x2="555.6" y2="39.2" stroke="#222" stroke-width="1.1"/>
<path d="M562.5,31.5 H567 C570.5,31.5 572,33.8 572,36 C572,38.2 570.5,40.5 567,40.5 H562.5 Z" fill="#fff" stroke="#222" stroke-width="1.1"/><path d="M560,34 H562.5 M560,38 H562.5 M572,36 H574" stroke="#222" stroke-width="1"/>
<rect x="582.2" y="30.2" width="2.3" height="7" rx="1.1" fill="#fff" stroke="#111" stroke-width="0.75" transform="rotate(-12 583.3000000000001 37.2)"/>
<rect x="584.8" y="29.6" width="2.3" height="7" rx="1.1" fill="#fff" stroke="#111" stroke-width="0.75" transform="rotate(-4 585.9 36.6)"/>
<rect x="587.4" y="30.3" width="2.3" height="7" rx="1.1" fill="#fff" stroke="#111" stroke-width="0.75" transform="rotate(6 588.5 37.3)"/>
<rect x="589.8" y="32" width="2.3" height="6" rx="1.1" fill="#fff" stroke="#111" stroke-width="0.75" transform="rotate(14 590.9 38)"/>
<path d="M578.6,35.8 C579.5,35 580.6,35.5 581.5,36.8 L582,34.5 H590.5 L590.6,38 C590.5,41 588.5,42.5 585.8,42.5 C583.2,42.5 582,41.5 580.8,39.5 Z" fill="#fff" stroke="#111" stroke-width="0.8"/>
<rect x="598.6" y="32.3" width="2.4" height="5" rx="1.2" fill="#fff" stroke="#111" stroke-width="0.75"/>
<rect x="600.9" y="31.2" width="2.4" height="5" rx="1.2" fill="#fff" stroke="#111" stroke-width="0.75"/>
<rect x="603.2" y="31.2" width="2.4" height="5" rx="1.2" fill="#fff" stroke="#111" stroke-width="0.75"/>
<rect x="605.5" y="32.2" width="2.4" height="5" rx="1.2" fill="#fff" stroke="#111" stroke-width="0.75"/>
<path d="M597.2,36.6 C597.6,35.8 598.4,35.8 598.9,36.4 V35.6 H608 L608.4,37.6 C608.2,40.5 606.5,41.8 603.8,41.8 C601.4,41.8 600,40.5 598.8,39 Z" fill="#fff" stroke="#111" stroke-width="0.8"/>
<path d="M618,33 C620,30.5 625,30.5 626.2,34.5 C627,38.5 623,41.5 619.5,40" fill="none" stroke="#c0c0c8" stroke-width="1"/><path d="M616,31 L616.5,35 L620,34" fill="none" stroke="#c0c0c8" stroke-width="1"/>
<path d="M642.5,33 C640.5,30.5 635.5,30.5 634.3,34.5 C633.5,38.5 637.5,41.5 641,40" fill="none" stroke="#c0c0c8" stroke-width="1"/><path d="M644.5,31 L644,35 L640.5,34" fill="none" stroke="#c0c0c8" stroke-width="1"/>
<path d="M651,36 H655.2 M651,38.8 H654 M651,41.6 H655.2 M651.2,35.5 V42 M656.5,37 V42 M656.5,37 H665 V42 M660.5,37 V40" fill="none" stroke="#b8c0c8" stroke-width="1"/><path d="M653,33.5 C655,30 661,30 662.5,33 L663.5,32" fill="none" stroke="#b8c0c8" stroke-width="0.8"/>
<path d="M669,36 H673.2 M669,38.8 H672 M669,41.6 H673.2 M669.2,35.5 V42 M677.5,36 H682 M678.5,38.8 H682 M677.5,41.6 H682 M681.8,35.5 V42" fill="none" stroke="#b8c0c8" stroke-width="1"/><path d="M671,33.5 C673,30 679,30 680.5,33 L681.5,32" fill="none" stroke="#b8c0c8" stroke-width="0.8"/>
<text x="687.5" y="40.8" font-family="Liberation Serif" font-style="italic" font-weight="bold" font-size="10.5" fill="#111" textLength="12.5" lengthAdjust="spacingAndGlyphs">Aa</text>
<text x="705.5" y="40" font-weight="bold" font-size="9.5" fill="#222" textLength="12.6" lengthAdjust="spacingAndGlyphs">.op</text>
<path d="M12.5,50.2 L9.3,52.800000000000004 V56.7 L12.0,58.5 L13.2,59.800000000000004" fill="none" stroke="#1010f0" stroke-width="0.9"/><rect x="8.5" y="52.5" width="1.6" height="4.6" fill="#1010f0"/><rect x="7.3" y="54.300000000000004" width="1.5" height="1.1" fill="#1010f0"/><rect x="11.1" y="57.400000000000006" width="2" height="1.8" fill="#1010f0"/>
<text x="19" y="57.7" textLength="139.0" lengthAdjust="spacingAndGlyphs" font-size="6.8" font-weight="normal" fill="#222" >FM RATIO DETECTOR COMPLETE other version</text>
<path d="M171.5,50.2 L168.3,52.800000000000004 V56.7 L171.0,58.5 L172.2,59.800000000000004" fill="none" stroke="#1010f0" stroke-width="0.9"/><rect x="167.5" y="52.5" width="1.6" height="4.6" fill="#1010f0"/><rect x="166.3" y="54.300000000000004" width="1.5" height="1.1" fill="#1010f0"/><rect x="170.1" y="57.400000000000006" width="2" height="1.8" fill="#1010f0"/>
<text x="178" y="57.7" textLength="151.5" lengthAdjust="spacingAndGlyphs" font-size="6.8" font-weight="normal" fill="#222" >FM RATIO DETECTOR COMPLETE other versionTran</text>
<path d="M9,434.3 L13.5,433.7 V438.2 H9 Z M14.3,433.6 L18.8,433 V438.2 H14.3 Z M9,439 H13.5 V443.5 L9,442.9 Z M14.3,439 H18.8 V444.2 L14.3,443.6 Z" fill="#fff"/>
<circle cx="43.6" cy="436.7" r="3" fill="none" stroke="#fff" stroke-width="1"/><line x1="41.5" y1="438.8" x2="37.5" y2="442.8" stroke="#fff" stroke-width="1.1"/>
<rect x="66.5" y="435.5" width="5.5" height="5.5" fill="none" stroke="#fff" stroke-width="0.9"/><path d="M65,434 H73.5 M65,442.5 H73.5 M75,435 V436.5 M75,438 V439.5 M75,441 V442.5" stroke="#fff" stroke-width="0.9"/>
<path d="M104.5,440.5 C103,443 100,444.2 98,443.8 C95,443 94.2,440 94.5,437.5 C95,434 97.5,431.8 100.5,431.8 C104,431.8 106,434.5 106,438 H97.5 C97.5,440.5 99,441.5 101,441.4 C102.5,441.3 103.8,440.8 104.5,440.5 Z M97.6,436 H103 C102.8,434.5 101.8,433.8 100.3,433.8 C99,433.8 97.9,434.8 97.6,436 Z" fill="#6070f0" fill-rule="evenodd"/>
<rect x="88.5" y="448.3" width="23.2" height="1.7" fill="#a8b4ff"/>
<rect x="121.8" y="435" width="13.6" height="10" fill="#fff"/><path d="M125.5,435 V433.5 C125.5,431.5 131.7,431.5 131.7,433.5 V435" fill="none" stroke="#fff" stroke-width="1.1"/>
<rect x="125.3" y="437" width="3" height="3" fill="#f25022"/><rect x="128.8" y="437" width="3" height="3" fill="#7fba00"/><rect x="125.3" y="440.5" width="3" height="3" fill="#00a4ef"/><rect x="128.8" y="440.5" width="3" height="3" fill="#ffb900"/>
<path d="M151.3,433.3 H156 L157.2,434.8 H164.2 V444 H151.3 Z" fill="#e8c860"/><rect x="151.3" y="437" width="12.9" height="7" fill="#f6d86e"/><rect x="153.5" y="438.5" width="8.5" height="4" fill="#8aa8d0"/>
<path d="M179.3,436.5 L186.5,432.8 L193.7,436.5 V443.2 H179.3 Z" fill="#fff"/><path d="M179.3,436.5 L186.5,440.5 L193.7,436.5" fill="none" stroke="#0c0f16" stroke-width="1"/><path d="M184,439.5 L193.7,437 L186,441.5 Z" fill="#0c0f16"/>
<rect x="201" y="427" width="28" height="23" fill="#3a3d44"/><rect x="201" y="448.3" width="28" height="1.7" fill="#a0a8c0"/>
<path d="M206.8,431.5 H221 L219.5,434 L206.8,445.5 Z" fill="none" stroke="#1c1c1c" stroke-width="1.2"/><text x="209" y="438.5" font-size="6.5" font-weight="bold" fill="#1c1c1c">LT</text><circle cx="212.5" cy="437.6" r="0.9" fill="#e02020"/>
<circle cx="653" cy="434.6" r="1.5" fill="none" stroke="#eee" stroke-width="0.8"/><path d="M650.6,439.5 C651,437.5 652,436.8 653,436.8 C654.5,436.8 655.3,437.8 655.3,439" fill="none" stroke="#eee" stroke-width="0.8"/>
<circle cx="648.8" cy="437.6" r="1.6" fill="none" stroke="#eee" stroke-width="0.8"/><path d="M646,442.4 V440.6 C646,439.8 647,439.4 648.8,439.4 C650.6,439.4 651.4,439.8 651.4,440.6 V442.4" fill="none" stroke="#eee" stroke-width="0.8"/>
<path d="M668.2,440.6 L672,436.4 L675.8,440.6" fill="none" stroke="#eee" stroke-width="0.9"/>
<rect x="681.4" y="436.3" width="8.6" height="5" fill="#e6e6e6" stroke="#aaa" stroke-width="0.5"/><rect x="690" y="437.9" width="0.9" height="1.8" fill="#ccc"/>
<path d="M695,437.3 H696.8 L699.4,435 V442.6 L696.8,440.3 H695 Z" fill="none" stroke="#eee" stroke-width="0.8"/><path d="M700.8,437 C701.6,438 701.6,439.6 700.8,440.6 M702.5,435.6 C704,437.3 704,440.3 702.5,442" fill="none" stroke="#ddd" stroke-width="0.7"/>
<text x="710.5" y="441.3" textLength="13.5" lengthAdjust="spacingAndGlyphs" font-size="8.5" font-weight="normal" fill="#fff" >NLD</text>
<text x="741.6" y="436" textLength="12.9" lengthAdjust="spacingAndGlyphs" font-size="8" font-weight="normal" fill="#fff" >0:18</text>
<text x="731.6" y="446.3" textLength="34.0" lengthAdjust="spacingAndGlyphs" font-size="8" font-weight="normal" fill="#fff" >16/11/2018</text>
<path d="M776,433.5 H786 V441 H782.5 L780.5,443.5 V441 H776 Z" fill="none" stroke="#fff" stroke-width="0.9"/>
</svg>
</body></html>
